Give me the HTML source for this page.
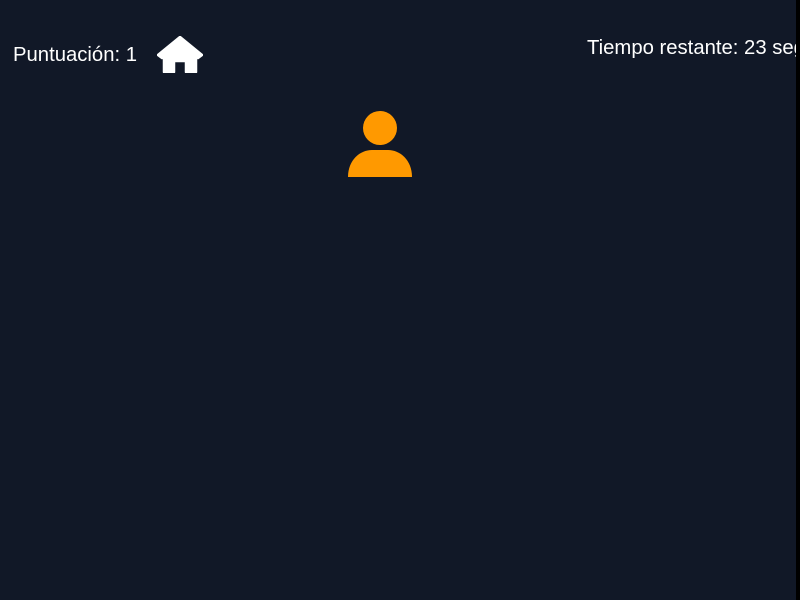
<!DOCTYPE html>
<html><head><meta charset="utf-8"><style>
html,body{margin:0;padding:0;width:800px;height:600px;overflow:hidden;background:#111827;font-family:"Liberation Sans",Arial,sans-serif;color:#fff}
.t{position:absolute;font-size:20.3px;white-space:nowrap;line-height:1;overflow:hidden}
.bar{position:absolute;right:0;top:0;width:4px;height:600px;background:#000}
</style></head><body>
<div class="t" style="left:13px;top:45px">Puntuación: 1</div>
<svg style="position:absolute;left:157px;top:36px" width="46" height="37" viewBox="0 0 46 37">
<path d="M23 1 L45 19 L41 22 L39 20.5 L39 36 L29 36 L29 25 L17 25 L17 36 L7 36 L7 20.5 L5 22 L1 19 Z" fill="#fff" stroke="#fff" stroke-width="2.5" stroke-linejoin="round"/>
</svg>
<div class="t" style="left:587px;top:38px;width:209px">Tiempo restante: 23 segundos</div>
<svg style="position:absolute;left:346px;top:110px" width="68" height="70" viewBox="0 0 68 70">
<circle cx="34" cy="18" r="17" fill="#ff9900"/>
<path d="M2 67 C2 50 14 40 26 40 L42 40 C54 40 66 50 66 67 Z" fill="#ff9900"/>
</svg>
<div class="bar"></div>
</body></html>
